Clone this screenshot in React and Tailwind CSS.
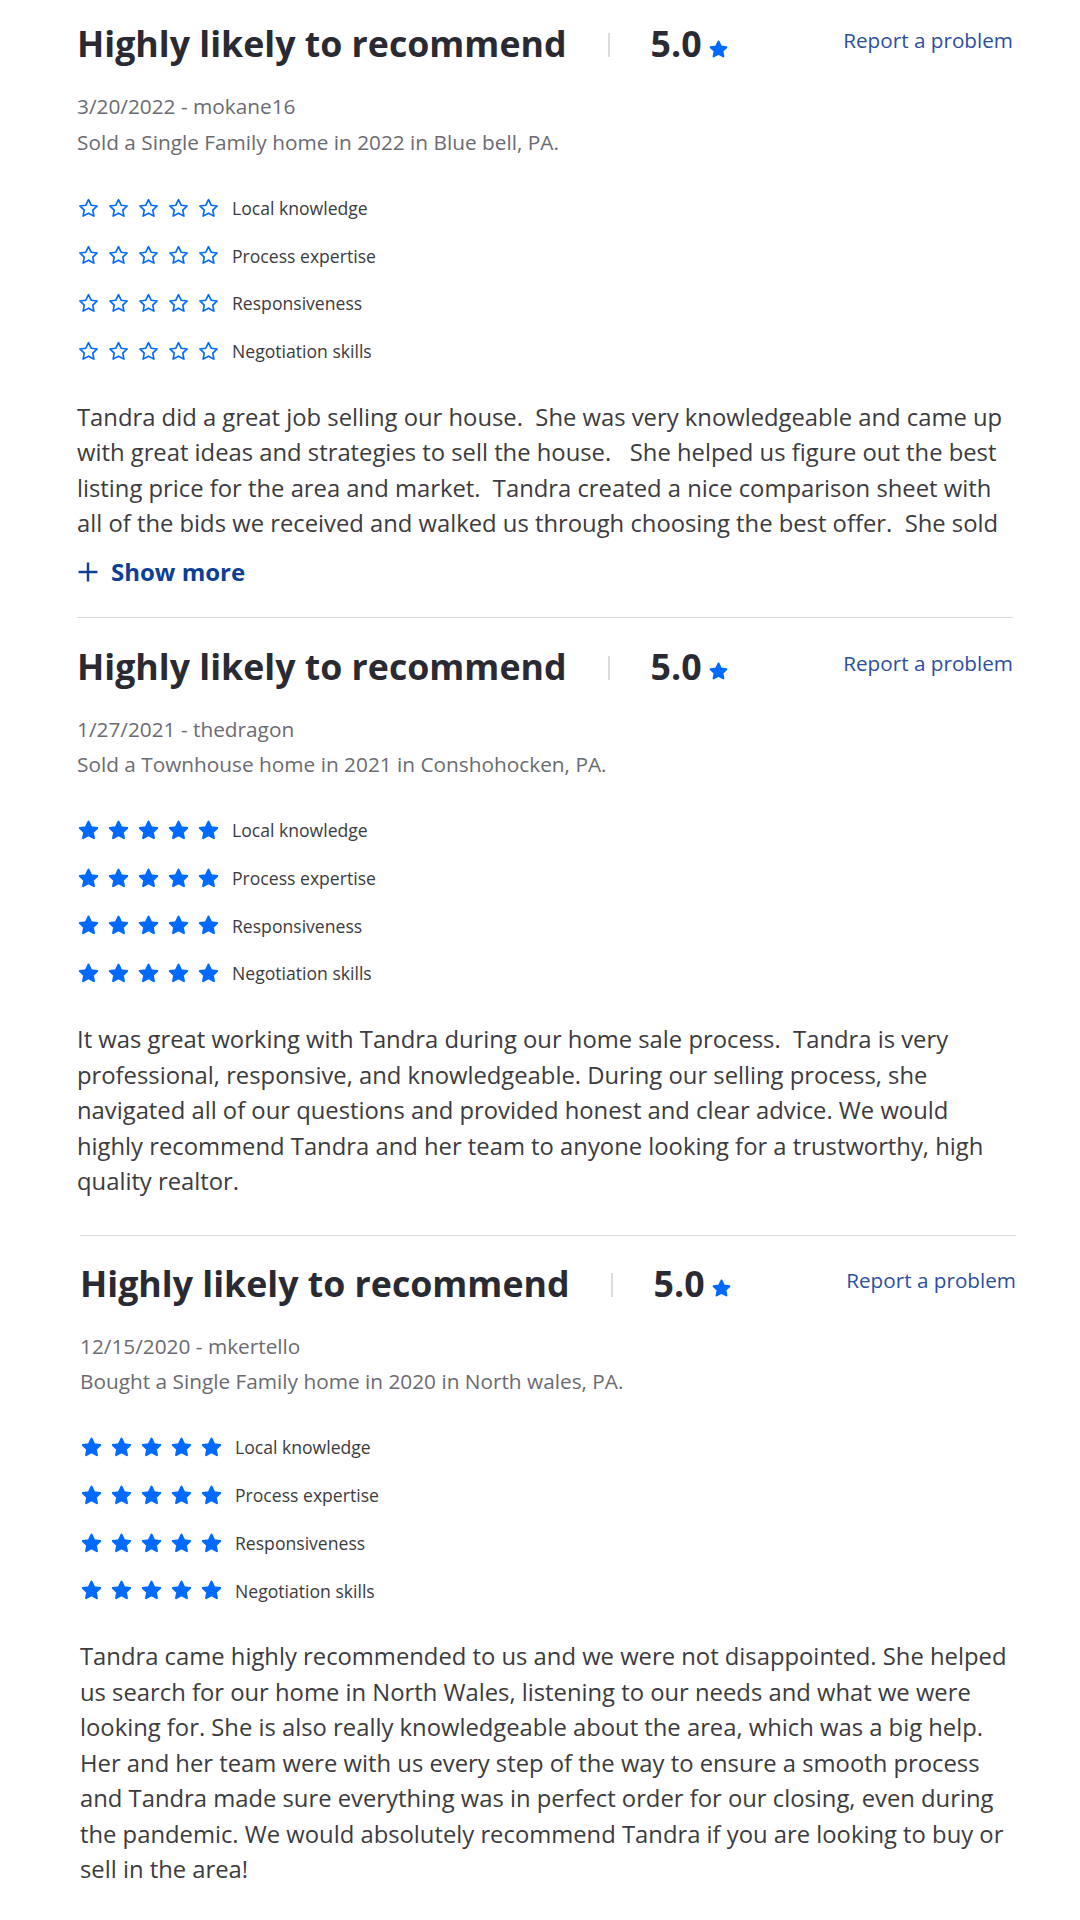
import React from "react";

const STAR = "M12 2.8l2.75 5.75 6.3.8-4.6 4.35 1.2 6.25L12 16.9l-5.65 3.05 1.2-6.25-4.6-4.35 6.3-.8z";

function Star({ filled, className }) {
  return (
    <svg viewBox="0 0 24 24" className={className} aria-hidden="true">
      <path
        d={STAR}
        fill={filled ? "#006aff" : "none"}
        stroke="#006aff"
        strokeWidth={filled ? 2.2 : 1.7}
        strokeLinejoin="round"
      />
    </svg>
  );
}

const LABELS = ["Local knowledge", "Process expertise", "Responsiveness", "Negotiation skills"];

function Review({ date, user, desc, filled, body, clamp, extra }) {
  return (
    <div className={extra}>
      <div className="flex items-center h-[46px]">
        <h2 className="text-[35.7px] leading-[46px] font-bold text-[#2a2a33]">
          Highly likely to recommend
        </h2>
        <span className="ml-[41px] mt-[4px] w-[2px] h-[24px] bg-[#dcdcdf]" />
        <span className="ml-[41px] text-[35.7px] leading-[46px] font-bold text-[#2a2a33]">5.0</span>
        <Star filled className="ml-[6px] mt-[12px] w-[21px] h-[21px]" />
        <a className="ml-auto -mt-[6px] text-[20.7px] text-[#2d4f9e] leading-[30px]">Report a problem</a>
      </div>
      <div className="mt-[23px] text-[20.8px] leading-[35.5px] text-[#6b6b72]">
        <div>
          {date} - {user}
        </div>
        <div>{desc}</div>
      </div>
      <div className="mt-[36px] flex flex-col gap-[23.7px]">
        {LABELS.map((l) => (
          <div key={l} className="flex items-center h-[24px]">
            <div className="flex gap-[7px]">
              {[0, 1, 2, 3, 4].map((i) => (
                <Star key={i} filled={filled} className="w-[23px] h-[23px]" />
              ))}
            </div>
            <span className="ml-[12px] text-[17.6px] text-[#3b3b40]">{l}</span>
          </div>
        ))}
      </div>
      <p
        className={
          "mt-[36.5px] text-[23.8px] leading-[35.5px] text-[#3b3b40] whitespace-pre-wrap " +
          (clamp ? "h-[142px] overflow-hidden" : "")
        }
      >
        {body}
      </p>
      {clamp && (
        <button className="mt-[15px] flex items-center h-[30px] text-[#0d3f94] font-bold text-[24px]">
          <svg viewBox="0 0 24 24" className="w-[22px] h-[22px] mr-[12px]" aria-hidden="true">
            <path d="M12 3v18M3 12h18" stroke="#0d3f94" strokeWidth="2.6" strokeLinecap="square" />
          </svg>
          Show more
        </button>
      )}
    </div>
  );
}

export default function App() {
  return (
    <div
      className="bg-white min-h-[1920px] pl-[77px] pt-[20px]"
      style={{ fontFamily: "'Open Sans', 'Noto Sans', sans-serif" }}
    >
      <div className="w-[936px]">
        <Review
          extra="pb-[30px]"
          date="3/20/2022"
          user="mokane16"
          desc="Sold a Single Family home in 2022 in Blue bell, PA."
          filled={false}
          clamp
          body={
            "Tandra did a great job selling our house.  She was very knowledgeable and came up with great ideas and strategies to sell the house.   She helped us figure out the best listing price for the area and market.  Tandra created a nice comparison sheet with all of the bids we received and walked us through choosing the best offer.  She sold our house quickly and for a great price.  We would highly recommend her."
          }
        />
        <Review
          extra="border-t-[1.5px] border-[#dadadd] pt-[25px] pb-[35px]"
          date="1/27/2021"
          user="thedragon"
          desc="Sold a Townhouse home in 2021 in Conshohocken, PA."
          filled
          body="It was great working with Tandra during our home sale process.  Tandra is very professional, responsive, and knowledgeable. During our selling process, she navigated all of our questions and provided honest and clear advice. We would highly recommend Tandra and her team to anyone looking for a trustworthy, high quality realtor."
        />
        <Review
          extra="ml-[3px] -mr-[3px] border-t-[1.5px] border-[#dadadd] pt-[24px] pb-[30px]"
          date="12/15/2020"
          user="mkertello"
          desc="Bought a Single Family home in 2020 in North wales, PA."
          filled
          body="Tandra came highly recommended to us and we were not disappointed. She helped us search for our home in North Wales, listening to our needs and what we were looking for. She is also really knowledgeable about the area, which was a big help. Her and her team were with us every step of the way to ensure a smooth process and Tandra made sure everything was in perfect order for our closing, even during the pandemic. We would absolutely recommend Tandra if you are looking to buy or sell in the area!"
        />
      </div>
    </div>
  );
}
